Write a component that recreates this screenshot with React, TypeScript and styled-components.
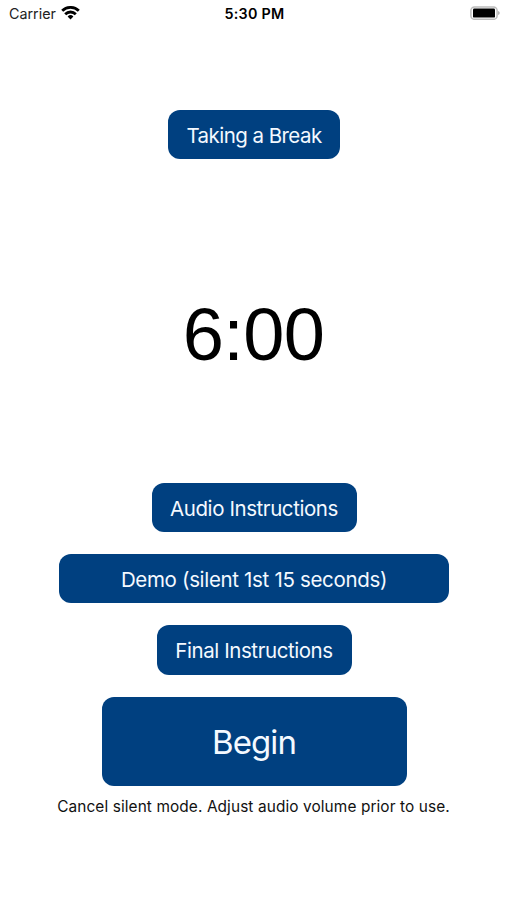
import React from "react";
import styled, { createGlobalStyle } from "styled-components";

const GlobalStyle = createGlobalStyle`
  * { box-sizing: border-box; }
  body { margin: 0; background: #fff; font-family: Inter, "Liberation Sans", sans-serif; }
`;

const Screen = styled.main`
  width: 507px;
  height: 900px;
  display: flex;
  flex-direction: column;
  align-items: center;
  background: #fff;
  color: #000;
  overflow: hidden;
`;

const StatusBar = styled.header`
  width: 100%;
  height: 27px;
  padding: 0 7px 0 9px;
  display: grid;
  grid-template-columns: 1fr auto 1fr;
  align-items: center;
  flex: none;
`;

const Carrier = styled.div`
  display: flex;
  align-items: center;
  gap: 5px;
  color: #222;
  font-size: 14.3px;
  line-height: 27px;
  white-space: nowrap;
`;

const Wifi = styled(WifiIcon)`
  margin-top: -2px;
`;

const Clock = styled.time`
  font-size: 14.3px;
  font-weight: 600;
  letter-spacing: 0.3px;
  line-height: 27px;
  white-space: nowrap;
`;

const BatterySlot = styled.div`
  display: flex;
  justify-content: flex-end;
  margin-top: -1px;
`;

const ActionButton = styled.button<{ $width: number; $spacing: number; $large?: boolean }>`
  flex: none;
  width: ${(p) => p.$width}px;
  height: ${(p) => (p.$large ? 89.5 : 49.2)}px;
  padding: ${(p) => (p.$large ? 2 : 3)}px 0 0;
  border: 0;
  border-radius: 12px;
  background: #004080;
  color: #f4f9ff;
  font-family: inherit;
  font-size: ${(p) => (p.$large ? 33 : 20.5)}px;
  letter-spacing: ${(p) => p.$spacing}px;
  line-height: 1;
  white-space: nowrap;
`;

const BreakSection = styled.section`
  margin-top: 83px;
  padding-left: 1px;
  display: flex;
`;

const Timer = styled.div`
  height: 90px;
  margin-top: 131px;
  font-family: "Liberation Sans", Arial, sans-serif;
  font-size: 74px;
  letter-spacing: -0.6px;
  line-height: 90px;
  flex: none;
`;

const Actions = styled.section`
  margin-top: 102.8px;
  padding-left: 1px;
  display: flex;
  flex-direction: column;
  align-items: center;
  gap: 22px;
`;

const Note = styled.p`
  margin: 10px 0 0;
  color: #111;
  font-size: 15.4px;
  letter-spacing: 0.1px;
  line-height: 21px;
  white-space: nowrap;
`;

function WifiIcon({ className }: { className?: string }) {
  return (
    <svg className={className} width="19" height="14" viewBox="0 0 19 14">
      <g fill="none" stroke="#000" strokeWidth="2.8">
        <path d="M1.2 4.8a11.8 11.8 0 0 1 16.6 0" />
        <path d="M4.2 8.2a7.5 7.5 0 0 1 10.6 0" />
      </g>
      <path d="M9.5 13.5 6.6 10.4a4.1 4.1 0 0 1 5.8 0Z" />
    </svg>
  );
}

const Battery = () => (
  <svg width="30" height="14" viewBox="0 0 30 14">
    <rect x="0.9" y="0.9" width="26.2" height="12.4" rx="3.6" fill="#fff" stroke="#bcbcbc" strokeWidth="1.5" />
    <rect x="3" y="2.6" width="22" height="9" rx="1.2" />
    <path d="M28 4.9q1.8.6 1.8 2.1T28 9.1Z" fill="#b5b5b5" />
  </svg>
);

export default function App() {
  return (
    <>
      <GlobalStyle />
      <Screen>
        <StatusBar>
          <Carrier>Carrier <Wifi /></Carrier>
          <Clock>5:30 PM</Clock>
          <BatterySlot><Battery /></BatterySlot>
        </StatusBar>
        <BreakSection>
          <ActionButton $width={172} $spacing={-0.55}>Taking a Break</ActionButton>
        </BreakSection>
        <Timer>6:00</Timer>
        <Actions>
          <ActionButton $width={205} $spacing={-0.42}>Audio Instructions</ActionButton>
          <ActionButton $width={390} $spacing={-0.33}>Demo (silent 1st 15 seconds)</ActionButton>
          <ActionButton $width={195} $spacing={-0.42}>Final Instructions</ActionButton>
          <ActionButton $width={305} $spacing={-0.9} $large>Begin</ActionButton>
        </Actions>
        <Note>Cancel silent mode. Adjust audio volume prior to use.</Note>
      </Screen>
    </>
  );
}
